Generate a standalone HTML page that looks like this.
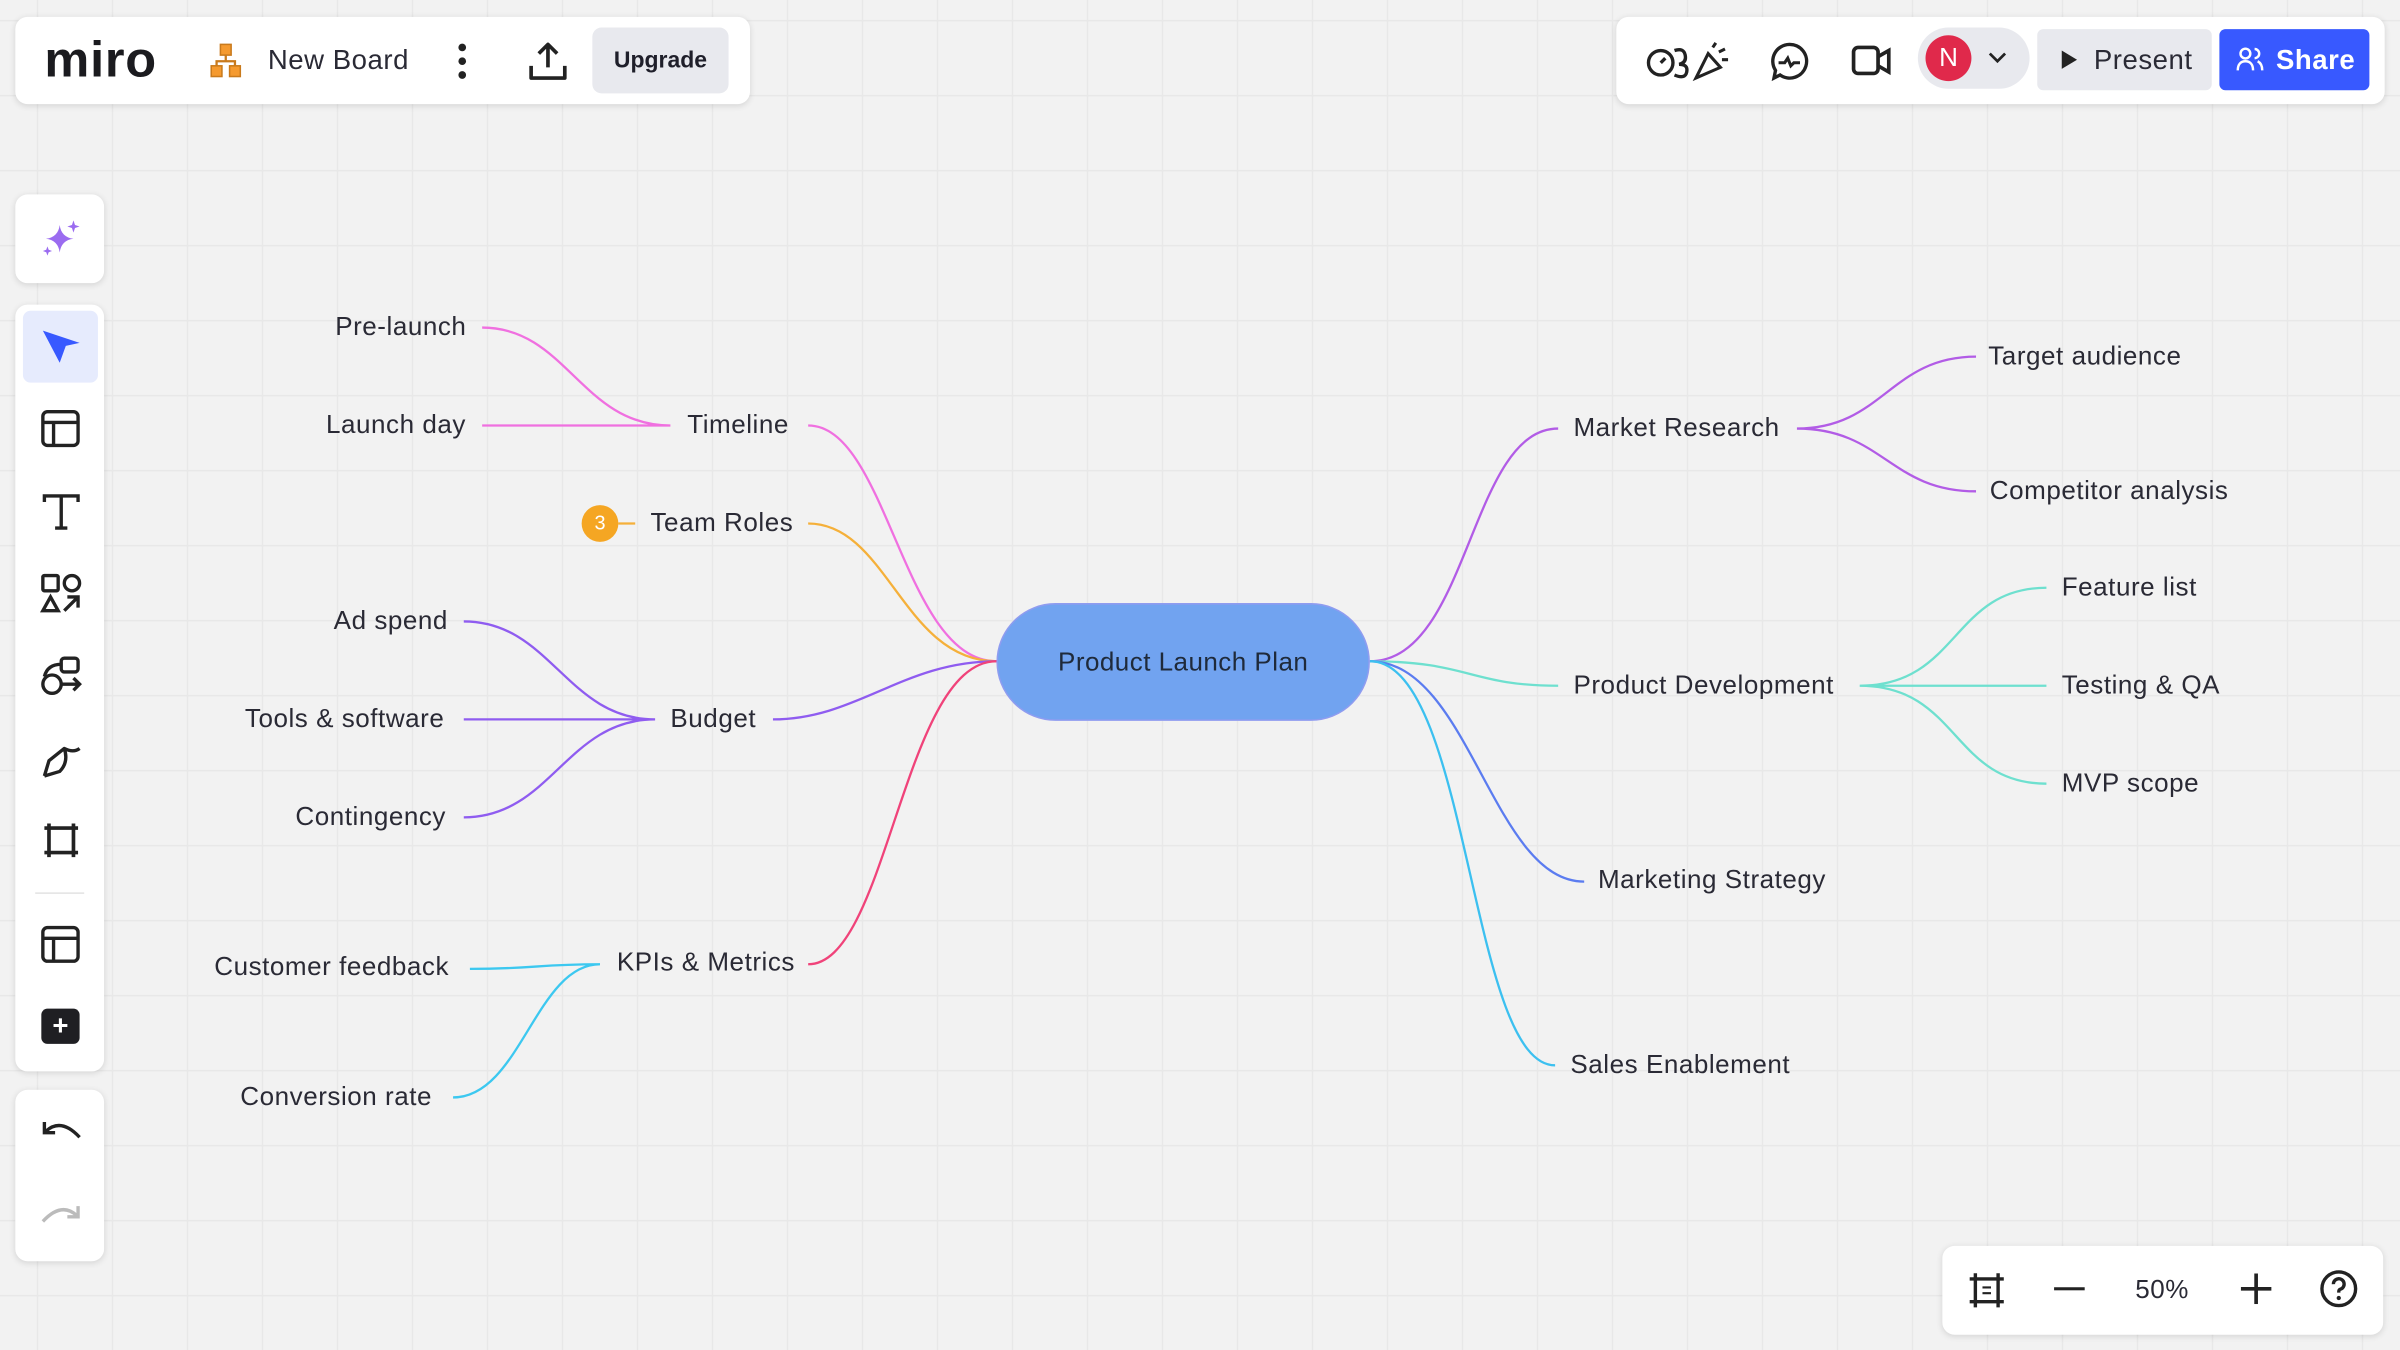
<!DOCTYPE html>
<html><head><meta charset="utf-8"><style>
*{margin:0;padding:0;box-sizing:border-box}
html,body{width:2400px;height:1350px;overflow:hidden;background:#f2f2f2}
#w{width:1568px;height:882px;transform:scale(1.530612);transform-origin:0 0;position:relative;
font-family:"Liberation Sans","DejaVu Sans",sans-serif;color:#1f1f2a;
background-color:#f2f2f2;
background-image:linear-gradient(#e8e8e8 1px,transparent 1px),linear-gradient(90deg,#e8e8e8 1px,transparent 1px);
background-size:49px 49px;background-position:24px 13px}
.card{position:absolute;background:#fff;border-radius:8px;box-shadow:0 1px 4px rgba(0,0,0,.12)}
.t{position:absolute;font-size:17px;white-space:nowrap;line-height:20px;color:#2a2a35;letter-spacing:0.35px}
.ic{position:absolute}
</style></head><body><div id="w">

<div class="card" style="left:10px;top:11px;width:480px;height:57px"></div>
<div style="position:absolute;left:29px;top:20px;font-size:33px;font-weight:bold;letter-spacing:0.5px;color:#1b1b1f">miro</div>
<svg class="ic" style="left:137px;top:28px" width="22" height="24" viewBox="0 0 22 24"><rect x="7" y="1" width="7" height="7" fill="#f59a2f" stroke="#c97a1c"/><rect x="1" y="15" width="7" height="7" fill="#f59a2f" stroke="#c97a1c"/><rect x="13" y="15" width="7" height="7" fill="#f59a2f" stroke="#c97a1c"/><path d="M10.5 8v4M4.5 15v-3h12v3" stroke="#c97a1c" fill="none" stroke-width="1.5"/></svg>
<div class="t" style="left:175px;top:29px;font-size:18px">New Board</div>
<svg class="ic" style="left:298px;top:27px" width="8" height="26"><circle cx="4" cy="4" r="2.5" fill="#222"/><circle cx="4" cy="13" r="2.5" fill="#222"/><circle cx="4" cy="22" r="2.5" fill="#222"/></svg>
<svg class="ic" style="left:344px;top:26px" width="28" height="28" viewBox="0 0 28 28"><path d="M14 3v15M8 9l6-6 6 6M3 17v8h22v-8" stroke="#222" stroke-width="2.4" fill="none" stroke-linejoin="round"/></svg>
<div style="position:absolute;left:387px;top:18px;width:89px;height:43px;background:#e8e9ee;border-radius:6px;font-size:15px;font-weight:bold;text-align:center;line-height:43px">Upgrade</div>

<div class="card" style="left:1056px;top:11px;width:502px;height:57px"></div>
<svg class="ic" style="left:1075px;top:25px" width="58" height="30" viewBox="0 0 58 30"><circle cx="10" cy="16" r="8" stroke="#222" stroke-width="2.2" fill="none"/><path d="M10 16l3-3M19 8q6-2 7 3t-4 6q6 0 5 5t-8 2" stroke="#222" stroke-width="2.2" fill="none"/><path d="M33 26l8-16 8 9zM44 6l2-3M48 9l4-2M50 14l4 0" stroke="#222" stroke-width="2" fill="none"/></svg>
<svg class="ic" style="left:1155px;top:26px" width="28" height="28" viewBox="0 0 28 28"><path d="M14 3a11 11 0 1 1-6 20l-4 2 1-5A11 11 0 0 1 14 3z" stroke="#222" stroke-width="2.2" fill="none"/><path d="M7 15h4l2-3 2 5 2-2h4" stroke="#222" stroke-width="2" fill="none"/></svg>
<svg class="ic" style="left:1209px;top:27px" width="28" height="26" viewBox="0 0 28 26"><rect x="2" y="4" width="16" height="17" rx="3" stroke="#222" stroke-width="2.4" fill="none"/><path d="M18 10l7-4v14l-7-4" stroke="#222" stroke-width="2.4" fill="none"/></svg>
<div style="position:absolute;left:1253px;top:18px;width:73px;height:40px;background:#e8e9ee;border-radius:20px"></div>
<div style="position:absolute;left:1258px;top:23px;width:30px;height:30px;background:#e0294b;border-radius:50%;color:#fff;font-size:17px;text-align:center;line-height:30px">N</div>
<svg class="ic" style="left:1299px;top:34px" width="12" height="8"><path d="M1 1l5 5 5-5" stroke="#222" stroke-width="1.8" fill="none"/></svg>
<div style="position:absolute;left:1331px;top:19px;width:114px;height:40px;background:#e8e9ee;border-radius:4px"></div>
<svg class="ic" style="left:1346px;top:32px" width="12" height="14"><path d="M1 1l10 6-10 6z" fill="#222"/></svg>
<div class="t" style="left:1368px;top:29px;font-size:18px">Present</div>
<div style="position:absolute;left:1450px;top:19px;width:98px;height:40px;background:#3859ff;border-radius:4px"></div>
<svg class="ic" style="left:1461px;top:30px" width="18" height="17" viewBox="0 0 18 17"><circle cx="6" cy="5" r="3.2" stroke="#fff" stroke-width="1.6" fill="none"/><path d="M1 16c0-4 2-6 5-6s5 2 5 6M12 2a3 3 0 0 1 0 6M14 10c2 1 3 3 3 6" stroke="#fff" stroke-width="1.6" fill="none"/></svg>
<div class="t" style="left:1487px;top:29px;font-size:18px;color:#fff;font-weight:bold">Share</div>

<div class="card" style="left:10px;top:127px;width:58px;height:58px"></div>
<svg class="ic" style="left:26px;top:142px" width="28" height="28" viewBox="0 0 28 28"><path d="M13 5q1 8 9 9q-8 1-9 9q-1-8-9-9q8-1 9-9z" fill="#9b6cf0"/><path d="M22 2l1 3 3 1-3 1-1 3-1-3-3-1 3-1z" fill="#9b6cf0"/><path d="M5 19l.8 2.2L8 22l-2.2.8L5 25l-.8-2.2L2 22l2.2-.8z" fill="#9b6cf0"/></svg>
<div class="card" style="left:10px;top:199px;width:58px;height:501px"></div>
<div style="position:absolute;left:15px;top:203px;width:49px;height:47px;background:#e6ebfd;border-radius:5px"></div>
<svg class="ic" style="left:26px;top:213px" width="28" height="28" viewBox="0 0 28 28"><path d="M2 3l24 8-9 2-4 11z" fill="#3859ff"/></svg>
<svg class="ic" style="left:26px;top:267px" width="28" height="26" viewBox="0 0 28 26"><rect x="2" y="2" width="23" height="22" rx="3" stroke="#222" stroke-width="2.2" fill="none"/><path d="M2 9h23M9 9v15" stroke="#222" stroke-width="2.2"/></svg>
<svg class="ic" style="left:27px;top:321px" width="26" height="26" viewBox="0 0 26 26"><path d="M2 7V3h22v4M13 3v21M9 24h8" stroke="#222" stroke-width="2.2" fill="none"/></svg>
<svg class="ic" style="left:26px;top:374px" width="28" height="28" viewBox="0 0 28 28"><rect x="2" y="2" width="10" height="10" rx="1" stroke="#222" stroke-width="2.2" fill="none"/><circle cx="21" cy="7" r="5" stroke="#222" stroke-width="2.2" fill="none"/><path d="M7 16l5 9H2z" stroke="#222" stroke-width="2.2" fill="none"/><path d="M16 25l9-9M18 16h7v7" stroke="#222" stroke-width="2.2" fill="none"/></svg>
<svg class="ic" style="left:26px;top:428px" width="28" height="28" viewBox="0 0 28 28"><rect x="14" y="2" width="11" height="9" rx="2" stroke="#222" stroke-width="2.2" fill="none"/><circle cx="8" cy="19" r="6" stroke="#222" stroke-width="2.2" fill="none"/><path d="M3 14q2-8 11-8M14 19h12M22 15l4 4-4 4" stroke="#222" stroke-width="2.2" fill="none"/></svg>
<svg class="ic" style="left:26px;top:482px" width="28" height="28" viewBox="0 0 28 28"><path d="M3 25l3-10 10-8q6 3 10 0M3 25l10-3q6-6 3-15" stroke="#222" stroke-width="2.2" fill="none" stroke-linejoin="round"/></svg>
<svg class="ic" style="left:26px;top:535px" width="28" height="28" viewBox="0 0 28 28"><path d="M6 3v22M22 3v22M3 6h22M3 22h22" stroke="#222" stroke-width="2.4"/></svg>
<div style="position:absolute;left:23px;top:583px;width:32px;height:1px;background:#e3e3e3"></div>
<svg class="ic" style="left:26px;top:604px" width="28" height="26" viewBox="0 0 28 26"><rect x="2" y="2" width="23" height="22" rx="3" stroke="#222" stroke-width="2.2" fill="none"/><path d="M2 9h23M9 9v15" stroke="#222" stroke-width="2.2"/></svg>
<div style="position:absolute;left:27px;top:659px;width:25px;height:23px;background:#1f1f23;border-radius:4px;color:#fff;font-size:18px;font-weight:bold;text-align:center;line-height:22px">+</div>
<div class="card" style="left:10px;top:712px;width:58px;height:112px"></div>
<svg class="ic" style="left:26px;top:730px" width="28" height="20" viewBox="0 0 28 20"><path d="M4 9q10-9 22 4M3 3v7h7" stroke="#222" stroke-width="2.2" fill="none"/></svg>
<svg class="ic" style="left:26px;top:785px" width="28" height="20" viewBox="0 0 28 20"><path d="M24 9Q14 0 2 13M25 3v7h-7" stroke="#bbb" stroke-width="2.2" fill="none"/></svg>

<div class="card" style="left:1269px;top:814px;width:288px;height:58px"></div>
<svg class="ic" style="left:1285px;top:830px" width="26" height="26" viewBox="0 0 28 28"><path d="M6 2v24M22 2v24M2 6h24M2 22h24" stroke="#222" stroke-width="2.4"/><path d="M11 12h6M11 16h6" stroke="#222" stroke-width="1.5"/></svg>
<div style="position:absolute;left:1342px;top:841px;width:20px;height:2.4px;background:#222"></div>
<div class="t" style="left:1395px;top:833px;font-size:17px">50%</div>
<svg class="ic" style="left:1464px;top:832px" width="20" height="20"><path d="M10 0v20M0 10h20" stroke="#222" stroke-width="2.4"/></svg>
<svg class="ic" style="left:1515px;top:829px" width="26" height="26" viewBox="0 0 26 26"><circle cx="13" cy="13" r="11" stroke="#222" stroke-width="2.2" fill="none"/><path d="M9.5 10a3.5 3.5 0 1 1 4.5 3.3c-1 .4-1 1-1 2.2" stroke="#222" stroke-width="2.2" fill="none"/><circle cx="13" cy="19" r="1.4" fill="#222"/></svg>

<svg class="ic" style="left:0;top:0" width="1568" height="882" fill="none" stroke-width="1.5">
<path d="M651 432C590 432 580 278 528 278" stroke="#f070e0"/>
<path d="M438 278C380 278 370 214 315 214M438 278H315" stroke="#f070e0"/>
<path d="M651 432C590 432 580 342 528 342" stroke="#f5b03a"/>
<path d="M415 342H404" stroke="#f5b03a"/>
<path d="M651 432C590 432 560 470 505 470" stroke="#8f5cf0"/>
<path d="M428 470C370 470 360 406 303 406M428 470H303M428 470C370 470 360 534 303 534" stroke="#8f5cf0"/>
<path d="M651 432C590 432 580 630 528 630" stroke="#f0437a"/>
<path d="M392 630C350 630 350 633 307 633M392 630C350 630 340 717 296 717" stroke="#3cc8f0"/>
<path d="M895 432C960 432 960 280 1018 280" stroke="#b25ce6"/>
<path d="M1174 280C1230 280 1235 233 1291 233M1174 280C1230 280 1235 321 1291 321" stroke="#b25ce6"/>
<path d="M895 432C960 432 960 448 1018 448" stroke="#6ee0cf"/>
<path d="M1215 448C1280 448 1275 384 1337 384M1215 448H1337M1215 448C1280 448 1275 512 1337 512" stroke="#6ee0cf"/>
<path d="M895 432C960 432 975 576 1035 576" stroke="#5b7cf0"/>
<path d="M895 432C960 432 960 696 1016 696" stroke="#3cc0f0"/>
</svg>
<div style="position:absolute;left:651px;top:394px;width:244px;height:77px;background:#71a3f0;border:1px solid #8f9cf0;border-radius:39px;text-align:center;line-height:75px;font-size:17px;color:#1f2a3a;letter-spacing:0.3px">Product Launch Plan</div>

<div class="t" style="left:219px;top:204px">Pre-launch</div>
<div class="t" style="left:213px;top:268px">Launch day</div>
<div class="t" style="left:449px;top:268px">Timeline</div>
<div style="position:absolute;left:380px;top:330px;width:24px;height:24px;border-radius:50%;background:#f5a623;color:#fff;font-size:13px;text-align:center;line-height:24px">3</div>
<div class="t" style="left:425px;top:332px">Team Roles</div>
<div class="t" style="left:218px;top:396px">Ad spend</div>
<div class="t" style="left:160px;top:460px">Tools &amp; software</div>
<div class="t" style="left:193px;top:524px">Contingency</div>
<div class="t" style="left:438px;top:460px">Budget</div>
<div class="t" style="left:140px;top:622px">Customer feedback</div>
<div class="t" style="left:157px;top:707px">Conversion rate</div>
<div class="t" style="left:403px;top:619px">KPIs &amp; Metrics</div>
<div class="t" style="left:1028px;top:270px">Market Research</div>
<div class="t" style="left:1299px;top:223px">Target audience</div>
<div class="t" style="left:1300px;top:311px">Competitor analysis</div>
<div class="t" style="left:1028px;top:438px">Product Development</div>
<div class="t" style="left:1347px;top:374px">Feature list</div>
<div class="t" style="left:1347px;top:438px">Testing &amp; QA</div>
<div class="t" style="left:1347px;top:502px">MVP scope</div>
<div class="t" style="left:1044px;top:565px">Marketing Strategy</div>
<div class="t" style="left:1026px;top:686px">Sales Enablement</div>
</div></body></html>
